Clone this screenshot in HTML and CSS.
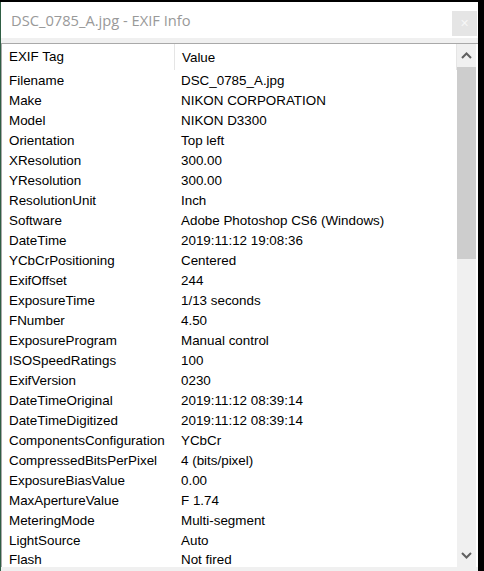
FILE: index.html
```html
<!DOCTYPE html>
<html lang="en">
<head>
<meta charset="UTF-8">
<meta name="viewport" content="width=device-width, initial-scale=1.0">
<title>EXIF Info</title>
<link rel="stylesheet" href="styles.css">
</head>
<body>
<div class="window">
  <div class="titlebar">
    <span class="title">DSC_0785_A.jpg - EXIF Info</span>
    <span class="close-btn">&#x2715;</span>
  </div>

  <div class="listview">
    <div class="list-body">
      <div class="list-header">
        <div class="col-tag">EXIF Tag</div>
        <div class="col-value">Value</div>
      </div>
      <div class="row"><div class="col-tag">Filename</div><div class="col-value">DSC_0785_A.jpg</div></div>
      <div class="row"><div class="col-tag">Make</div><div class="col-value">NIKON CORPORATION</div></div>
      <div class="row"><div class="col-tag">Model</div><div class="col-value">NIKON D3300</div></div>
      <div class="row"><div class="col-tag">Orientation</div><div class="col-value">Top left</div></div>
      <div class="row"><div class="col-tag">XResolution</div><div class="col-value">300.00</div></div>
      <div class="row"><div class="col-tag">YResolution</div><div class="col-value">300.00</div></div>
      <div class="row"><div class="col-tag">ResolutionUnit</div><div class="col-value">Inch</div></div>
      <div class="row"><div class="col-tag">Software</div><div class="col-value">Adobe Photoshop CS6 (Windows)</div></div>
      <div class="row"><div class="col-tag">DateTime</div><div class="col-value">2019:11:12 19:08:36</div></div>
      <div class="row"><div class="col-tag">YCbCrPositioning</div><div class="col-value">Centered</div></div>
      <div class="row"><div class="col-tag">ExifOffset</div><div class="col-value">244</div></div>
      <div class="row"><div class="col-tag">ExposureTime</div><div class="col-value">1/13 seconds</div></div>
      <div class="row"><div class="col-tag">FNumber</div><div class="col-value">4.50</div></div>
      <div class="row"><div class="col-tag">ExposureProgram</div><div class="col-value">Manual control</div></div>
      <div class="row"><div class="col-tag">ISOSpeedRatings</div><div class="col-value">100</div></div>
      <div class="row"><div class="col-tag">ExifVersion</div><div class="col-value">0230</div></div>
      <div class="row"><div class="col-tag">DateTimeOriginal</div><div class="col-value">2019:11:12 08:39:14</div></div>
      <div class="row"><div class="col-tag">DateTimeDigitized</div><div class="col-value">2019:11:12 08:39:14</div></div>
      <div class="row"><div class="col-tag">ComponentsConfiguration</div><div class="col-value">YCbCr</div></div>
      <div class="row"><div class="col-tag">CompressedBitsPerPixel</div><div class="col-value">4 (bits/pixel)</div></div>
      <div class="row"><div class="col-tag">ExposureBiasValue</div><div class="col-value">0.00</div></div>
      <div class="row"><div class="col-tag">MaxApertureValue</div><div class="col-value">F 1.74</div></div>
      <div class="row"><div class="col-tag">MeteringMode</div><div class="col-value">Multi-segment</div></div>
      <div class="row"><div class="col-tag">LightSource</div><div class="col-value">Auto</div></div>
      <div class="row"><div class="col-tag">Flash</div><div class="col-value">Not fired</div></div>
    </div>

    <div class="scrollbar">
      <div class="scroll-btn">
        <svg width="11" height="7" viewBox="0 0 11 7"><path d="M1 6 L5.5 1.5 L10 6" fill="none" stroke="#606060" stroke-width="2"/></svg>
      </div>
      <div class="scroll-track">
        <div class="scroll-thumb"></div>
      </div>
      <div class="scroll-btn">
        <svg width="11" height="7" viewBox="0 0 11 7"><path d="M1 1 L5.5 5.5 L10 1" fill="none" stroke="#606060" stroke-width="2"/></svg>
      </div>
    </div>
  </div>
</div>
</body>
</html>
```

FILE: styles.css
```css
/* dialog look */
body {
  margin: 0;
  padding: 0;
  background-color: #000;
  height: 571px;
  overflow: hidden;
}

.window {
  width: 477px;
  height: 569px;
  margin-top: 2px;
  border-left: 1px solid #2f5e44;
  background-color: #f0f0f0;
  display: flex;
  flex-direction: column;
  font-family: "Liberation Sans", Arial, sans-serif;
  font-size: 13.4px;
  color: #000;
}

.titlebar {
  height: 36px;
  background-color: #fff;
  display: flex;
  align-items: center;
  justify-content: space-between;
  padding: 0 1px 0 10px;
}

.title {
  font-family: "Open Sans", "Noto Sans", sans-serif;
  font-size: 14.7px;
  color: #999;
}

.close-btn {
  width: 25px;
  height: 25px;
  margin-top: 6px;
  background-color: #e5e5e5;
  color: #f7f7f7;
  font-size: 11px;
  display: flex;
  align-items: center;
  justify-content: center;
}

.listview {
  margin-top: 5px;
  height: 523px;
  border-top: 1px solid #a9a9a9;
  border-left: 1px solid #a9a9a9;
  background-color: #fff;
  display: flex;
  padding-right: 2px;
}

.list-body {
  flex: 1;
  overflow: hidden;
}

.list-header {
  height: 26px;
  display: flex;
  align-items: center;
  border-right: 1px solid #e5e5e5;
}

.list-header .col-tag {
  border-right: 1px solid #e5e5e5;
  height: 26px;
  line-height: 26px;
}

.row {
  height: 20px;
  display: flex;
  align-items: center;
}

/* last row is cut by the bottom of the list */
.row:last-child {
  height: 17px;
  align-items: flex-start;
  padding-top: 2px;
  line-height: 15px;
}

.col-tag {
  width: 165px;
  padding-left: 7px;
  flex-shrink: 0;
}

.col-value {
  padding-left: 7px;
}

.scrollbar {
  width: 19px;
  background-color: #f0f0f0;
  display: flex;
  flex-direction: column;
}

.scroll-btn {
  height: 23px;
  display: flex;
  align-items: center;
  justify-content: center;
}

.scroll-track {
  flex: 1;
}

.scroll-thumb {
  height: 192px;
  background-color: #cdcdcd;
}
```
